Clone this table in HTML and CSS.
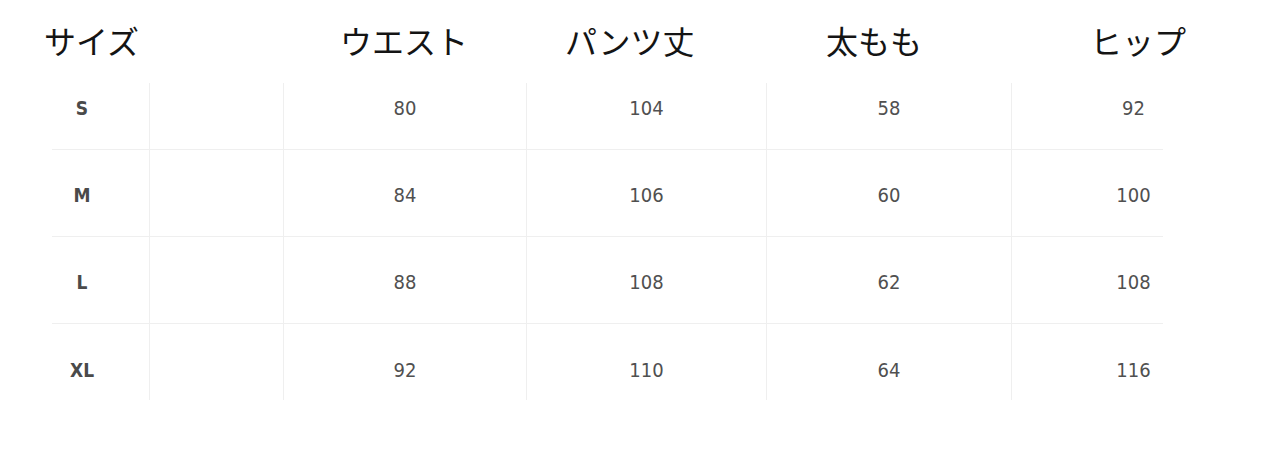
FILE: index.html
```html
<!DOCTYPE html>
<html lang="ja">
<head>
<meta charset="utf-8">
<title>サイズ表</title>
<link rel="stylesheet" href="styles.css">
</head>
<body>
<div class="chart">
  <div class="head">
    <span>サイズ</span>
    <span>ウエスト</span>
    <span>パンツ丈</span>
    <span>太もも</span>
    <span>ヒップ</span>
  </div>
  <div class="grid">
    <div class="cell size r1">S</div><div class="cell r1"></div><div class="cell r1">80</div><div class="cell r1">104</div><div class="cell r1">58</div><div class="cell last r1">92</div>
    <div class="cell size mid">M</div><div class="cell mid"></div><div class="cell mid">84</div><div class="cell mid">106</div><div class="cell mid">60</div><div class="cell last mid">100</div>
    <div class="cell size mid">L</div><div class="cell mid"></div><div class="cell mid">88</div><div class="cell mid">108</div><div class="cell mid">62</div><div class="cell last mid">108</div>
    <div class="cell size r4">XL</div><div class="cell r4"></div><div class="cell r4">92</div><div class="cell r4">110</div><div class="cell r4">64</div><div class="cell last r4">116</div>
  </div>
</div>
</body>
</html>
```
FILE: styles.css
```css
html, body {
  margin: 0;
  padding: 0;
  background: #ffffff;
}

.chart {
  width: 1280px;
  height: 455px;
  overflow: hidden;
}

.head {
  display: grid;
  grid-template-columns: 296px 225px 261px 264px auto;
  padding: 20px 0 0 44px;
  height: 43px;
  box-sizing: border-box;
  font-family: "Noto Sans CJK JP", "Noto Sans", sans-serif;
  font-size: 32px;
  line-height: 40px;
  color: #141414;
}

.grid {
  display: grid;
  grid-template-columns: 97px 134px 243px 240px 245px 152px;
  grid-template-rows: 67px 87px 87px 76px;
  margin: 40px 0 0 52px;
  font-family: "DejaVu Sans Condensed", "DejaVu Sans", sans-serif;
  font-stretch: condensed;
  font-size: 20px;
  color: #505050;
}

.cell {
  display: flex;
  align-items: center;
  justify-content: center;
  border-left: 1px solid #efefef;
  border-bottom: 1px solid #efefef;
  box-sizing: border-box;
}

.cell.size {
  border-left: none;
  padding-right: 37px;
  font-weight: bold;
  color: #4a4a4a;
  font-size: 19px;
}

.cell.last {
  padding-left: 92px;
}

.cell.r1 {
  padding-bottom: 17px;
}

.cell.mid {
  padding-top: 4px;
}

.cell.r4 {
  border-bottom: none;
  padding-top: 16px;
}
```
